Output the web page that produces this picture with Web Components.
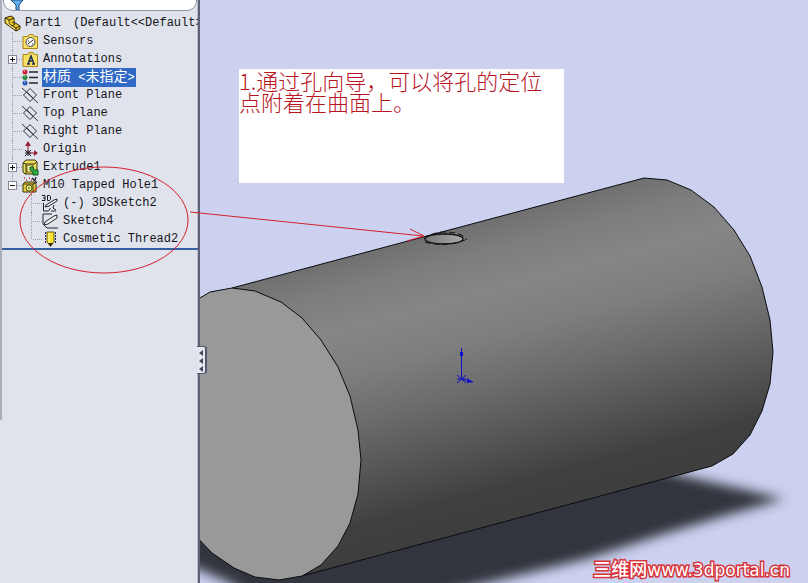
<!DOCTYPE html>
<html lang="zh-CN">
<head>
<meta charset="utf-8">
<title>Part1</title>
<style>
html,body{margin:0;height:100%}
body{overflow:hidden;font-family:"Liberation Mono","Noto Sans CJK SC",monospace;font-size:12px;color:#15151d}
</style>
</head>
<body>
<cad-workspace>
  <feature-panel slot="panel">
    <tree-row slot="tree" level="0" icon="part">Part1<span style="margin-left:12px">(Default&lt;&lt;Default&gt;</span></tree-row>
    <tree-row slot="tree" level="1" icon="sensor">Sensors</tree-row>
    <tree-row slot="tree" level="1" icon="note" toggle="+">Annotations</tree-row>
    <tree-row slot="tree" level="1" icon="material" selected><span style="font-size:14px">材质</span> &lt;<span style="font-size:14px">未指定</span>&gt;</tree-row>
    <tree-row slot="tree" level="1" icon="plane">Front Plane</tree-row>
    <tree-row slot="tree" level="1" icon="plane">Top Plane</tree-row>
    <tree-row slot="tree" level="1" icon="plane">Right Plane</tree-row>
    <tree-row slot="tree" level="1" icon="origin">Origin</tree-row>
    <tree-row slot="tree" level="1" icon="extrude" toggle="+">Extrude1</tree-row>
    <tree-row slot="tree" level="1" icon="hole" toggle="-">M10 Tapped Hole1</tree-row>
    <tree-row slot="tree" level="2" icon="sketch3d">(-) 3DSketch2</tree-row>
    <tree-row slot="tree" level="2" icon="sketch">Sketch4</tree-row>
    <tree-row slot="tree" level="2" icon="thread">Cosmetic Thread2</tree-row>
  </feature-panel>
  <model-view slot="view">
    <note-box slot="note">1.通过孔向导，可以将孔的定位点附着在曲面上。</note-box>
    <site-mark slot="mark"><span>三维网</span>www.3dportal.cn</site-mark>
  </model-view>
  <markup-layer slot="markup"></markup-layer>
</cad-workspace>
<script>
const define=(name,html,setup)=>customElements.define(name,class extends HTMLElement{
  connectedCallback(){
    if(this.shadowRoot)return;
    this.attachShadow({mode:'open'}).innerHTML=html;
    if(setup)setup(this,this.shadowRoot);
  }
});

const icons={
part:`<path d="M1 3l6-2 3 2v4l6 4v3l-4 2-11-8z" fill="#e8c62c" stroke="#33290a"/><path d="M1 3l4 2v4l7 4v3M5 5l5-2M12 13l4-2M8 7l3 2-3 2" fill="none" stroke="#33290a"/><path d="M2 5l2 1v3l7 5" fill="none" stroke="#fff09a"/>`,
sensor:`<path d="M1 3.5h5l1-2h4l1 2h3.500v12H1z" fill="#f9df62" stroke="#ae8517"/><circle cx="8.500" cy="9" r="4.500" fill="#fff" stroke="#3b414c"/><path d="M6 11l5-4M6 8h1M10 11h1" stroke="#222"/>`,
note:`<path d="M1 3.500h5l1-2h4l1 2h3.500v12H1z" fill="#f9df62" stroke="#ae8517"/><path d="M5 13h3M10 13h3M6 13l3-8 3 8M7 10h4" fill="none" stroke="#1c3158" stroke-width="1.500"/>`,
material:`<circle cx="3" cy="3" r="2.500" fill="#c91f37"/><circle cx="3" cy="8.500" r="2.500" fill="#288b3e"/><circle cx="3" cy="14" r="2.500" fill="#2456bd"/><path d="M2 2h1M2 7h1M2 13h1" stroke="#fff"/><path d="M7 3h9M7 8.500h9M7 14h9" stroke="#25272b" stroke-width="1.500"/>`,
plane:`<path d="M8 1.500l6.500 6.500L8 14.500 1.500 8zM0 1l16 15M5 5l6 6" fill="none" stroke="#30313c"/>`,
origin:`<path d="M6 13V2M6 12h7" stroke="#861a2e" fill="none"/><path d="M6 0L3 5h6zM16 12l-4-3v6z" fill="#9b2035"/><path d="M3 9l6 6M9 9l-6 6M3 12h6M6 9v6" stroke="#22222c"/>`,
extrude:`<path d="M1 4l3-3h9l2 2v11l-2 1H3l-2-2z" fill="#e9dc61" stroke="#38350d"/><path d="M1 4l3 1h8l3-2M4 5v10" fill="none" stroke="#38350d"/><path d="M5 6h6v7H5z" fill="#fff7a5" stroke="#665c18"/><path d="M8 8l3 0 1 3h4v5h-5v-3l-3-2z" fill="#2eae43" stroke="#135b20"/>`,
hole:`<path d="M2 1h1M7 1h1M4 3h1M9 3h1" stroke="#bc2730" stroke-width="1.500"/><path d="M10 1l5 5M14 0l-1 3" stroke="#20222a" stroke-width="1.300"/><path d="M1 7l2-2h9l2 2v8H1z" fill="#e6cf42" stroke="#38350d"/><path d="M1 7h10v8M11 7l2-1" fill="none" stroke="#38350d"/><circle cx="7" cy="11" r="3" fill="#f7ef7a" stroke="#534815"/><circle cx="7" cy="11" r="1" fill="#2d8c3a"/>`,
sketch3d:`<path d="M0 .5h3v5H0M1 3h2M5.500 .5v5h2l1-1v-3l-1-1z" fill="none" stroke="#171821"/><path d="M4 10l8-5 3-1v2l-8 5-4 1z" fill="#eee" stroke="#242631"/><path d="M1.500 8v8h5l2-3M9 16h5M12 10l-1 3 3 2" fill="none" stroke="#242631"/>`,
sketch:`<path d="M1 1h9M1 1v10l4 4h11" fill="none" stroke="#242631"/><path d="M3 9l9-6 3-1v3l-9 6-4 1z" fill="#eee" stroke="#242631"/>`,
thread:`<path d="M5 1h7v10l-3.500 4L5 11z" fill="#fae22e" stroke="#6b5b0c"/><path d="M7 2v9" stroke="#fffcb2"/><path d="M3.500 1v12M13.500 1v12" stroke="#252c58" stroke-dasharray="2 1"/><path d="M6 12l2.500 4 2.500-4z" fill="#312b15"/>`
};

define('cad-workspace',`<style>
:host{display:grid;grid-template-columns:200px minmax(0,1fr);height:100vh;position:relative;overflow:hidden;background:#cbd1ef}
</style><slot name="panel"></slot><slot name="view"></slot><slot name="markup"></slot>`);

define('feature-panel',`<style>
:host{display:block;box-sizing:border-box;min-width:0;position:relative;z-index:1;background:#e0e3eb;border-right:2px solid #5d6178;box-shadow:inset -1px 0 #b6bac9}
.strip{position:absolute;inset:0 auto auto 0;width:2px;height:72%;background:#abadba}
input{display:block;box-sizing:border-box;width:100%;height:20px;border:1px solid #9396a5;border-radius:10px;background:#fff;padding:0 8px 0 20px;font:inherit;outline:0}
.filter{padding:0 1px 0 3px;margin-top:-9px;position:relative}
.filter svg{position:absolute;left:10px;top:3px}
nav{overflow:hidden;padding:3px 1px 0 2px}
.bar{height:2px;background:#365fa0;margin-left:2px}
button{position:absolute;left:100%;top:346px;width:10px;height:28px;margin-left:-1px;padding:0;border:1px solid #55586f;border-left:0;border-width:1px 2px 1px 0;border-radius:0 3px 3px 0;background:#e5e7f0;display:grid;place-items:center}
</style><div class="strip"></div>
<div class="filter"><input type="text" aria-label="Filter"><svg width="14" height="16"><path d="M1 6h12L9 11v5H6v-5z" fill="#5fb2ea" stroke="#1c477e"/></svg></div>
<nav><slot name="tree"></slot></nav><div class="bar"></div>
<button aria-label="Collapse panel"><svg width="6" height="24"><path d="M5 2v6L1 5zM5 10v6L1 13zM5 18v6L1 21z" fill="#43475f"/></svg></button>`);

define('tree-row',`<style>
:host{display:flex;height:18px;align-items:center;white-space:pre;line-height:18px}
.guide{flex:none;position:relative;align-self:stretch}
:host([level="0"]) .guide{width:2px}
:host([level="1"]) .guide{width:20px}
:host([level="2"]) .guide{width:40px}
:host([level="1"]) .guide::before,:host([level="2"]) .guide::before{content:"";position:absolute;top:0;bottom:0;left:10px;border-left:1px dotted #9c9fa8}
:host([level="2"]) .guide::before{left:29px}
:host([icon="thread"]) .guide::before,:host([icon="hole"]) .guide::before{bottom:9px}
:host([level="1"]) .guide::after,:host([level="2"]) .guide::after{content:"";position:absolute;top:9px;right:0;width:9px;border-top:1px dotted #9c9fa8}
.icon{flex:none;width:17px;height:17px;margin-right:3px}
.label{padding:0 1px}
:host([selected]) .label{background:#316ac5;color:#fff}
button{position:absolute;z-index:1;left:6px;top:5px;width:9px;height:9px;padding:0;border:1px solid #85899a;background:#fff;display:grid;place-items:center}
</style><div class="guide"></div><svg class="icon" viewBox="0 0 17 17"></svg><span class="label"><slot></slot></span>`,(el,root)=>{
  root.querySelector('.icon').innerHTML=icons[el.getAttribute('icon')];
  const sign=el.getAttribute('toggle');
  if(sign)root.querySelector('.guide').innerHTML=`<button aria-label="${sign==='+'?'Expand':'Collapse'}"><svg width="7" height="7"><path d="M1 3.500h5${sign==='+'?'M3.500 1v5':''}" stroke="#111"/></svg></button>`;
});

define('model-view',`<style>
:host{display:grid;min-width:0;min-height:0;position:relative;overflow:hidden}
.scene{grid-area:1/1;width:100%;height:100%;display:block}
.over{grid-area:1/1;z-index:1;display:flex;flex-direction:column;justify-content:space-between;padding:69px 18px 4px 39px}
</style>
<svg class="scene" viewBox="200 0 608 583" preserveAspectRatio="xMinYMin slice" role="img" aria-label="Cylinder with tapped hole">
<defs>
<linearGradient id="side" gradientUnits="userSpaceOnUse" x1="438" y1="233" x2="515" y2="521"><stop offset="0" stop-color="#707070"/><stop offset=".1" stop-color="#7d7d7d"/><stop offset=".23" stop-color="#868686"/><stop offset=".38" stop-color="#7e7e7e"/><stop offset=".55" stop-color="#6b6b6b"/><stop offset=".72" stop-color="#555"/><stop offset=".88" stop-color="#404040"/><stop offset="1" stop-color="#3e3e3e"/></linearGradient>
<linearGradient id="bore"><stop stop-color="#777"/><stop offset="1" stop-color="#aaa"/></linearGradient>
<filter id="soft" x="-20%" y="-50%" width="140%" height="200%"><feGaussianBlur stdDeviation="6"/></filter>
</defs>
<path d="M170 480V556L200 570 232 584 262 610H390L450 592 586 559 664 534 724 516 784 499 742 489 684 476 640 465 400 500z" fill="#30343d" filter="url(#soft)"/>
<path d="M232 288L644 178 667 180 691 190 714 207 734 230 750 256 762 287 770 320 773 352 770 384 762 411 750 435 733 454 712 466 302 576z" fill="url(#side)" stroke="#0b0c12"/>
<path d="M190 304L200 298 210 292 232 288 255 291 281 302 302 318 321 340 338 367 350 396 358 430 361 460 358 494 350 523 338 546 321 565 302 576 279 580 255 577 234 568 212 553 190 530z" fill="#999" stroke="#0b0c12"/>
<ellipse cx="444" cy="239" rx="19" ry="5" fill="url(#bore)" stroke="#111" stroke-width="1.300"/>
<path d="M424 239q4-5 18-7 16 0 21 4l4 4M425 242q12 4 30 1l10-3" fill="none" stroke="#111" stroke-dasharray="6 3"/>
<path d="M461.500 379V348M461 379l12 3M457 375l9 8M466 375l-9 8M457 379h9" stroke="#1010c8" fill="none"/><path d="M460 352h3v4h-3zM467 378l6 4-6 1z" fill="#1010c8"/>
</svg>
<div class="over"><slot name="note"></slot><slot name="mark"></slot></div>`);

define('note-box',`<style>
:host{display:block;box-sizing:border-box;width:325px;max-width:100%;min-height:114px;background:#fff;color:#b8141f;font:300 22px/21px "Noto Sans CJK SC",sans-serif;padding-top:1px}
</style><slot></slot>`);

define('site-mark',`<style>
:host{display:block;align-self:flex-end;white-space:nowrap;font:17px/18px "DejaVu Sans","Noto Sans CJK SC",sans-serif;color:#fff;-webkit-text-stroke:3px #d8333b;paint-order:stroke fill}
::slotted(span){font-size:18px;font-weight:500}
</style><slot></slot>`);

define('markup-layer',`<style>
:host{position:absolute;inset:0;z-index:2;pointer-events:none}
svg{display:block;width:100%;height:100%}
</style><svg viewBox="0 0 808 583" preserveAspectRatio="xMinYMin slice" fill="none" stroke="#d3202d" aria-hidden="true"><ellipse cx="104" cy="220" rx="84" ry="53"/><path d="M190 212L423 236M410 229l14 7-17 5"/></svg>`);
</script>
</body>
</html>
